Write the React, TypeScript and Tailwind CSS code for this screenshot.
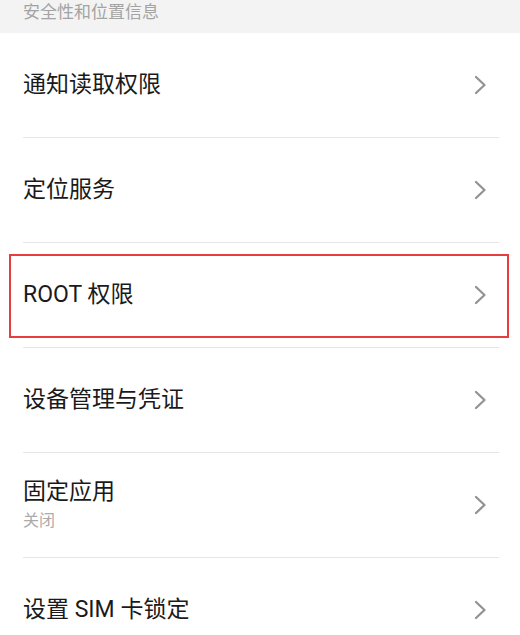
import React from 'react';

interface Item {
  title: string;
  sub?: string;
  highlight?: boolean;
}

const items: Item[] = [
  { title: '通知读取权限' },
  { title: '定位服务' },
  { title: 'ROOT 权限', highlight: true },
  { title: '设备管理与凭证' },
  { title: '固定应用', sub: '关闭' },
  { title: '设置 SIM 卡锁定' },
];

const Chevron = () => (
  <svg width="13" height="20" viewBox="0 0 13 20" fill="none" className="shrink-0">
    <path d="M2 2 L10.5 10 L2 18" stroke="#939393" strokeWidth="2.3" strokeLinecap="round" strokeLinejoin="round" />
  </svg>
);

const App: React.FC = () => {
  return (
    <div
      className="w-[520px] h-[635px] overflow-hidden bg-white"
      style={{ fontFamily: 'Roboto, "Noto Sans CJK SC", sans-serif' }}
    >
      {/* section header */}
      <div className="h-[33px] bg-[#f3f3f3] pl-[23px]">
        <span className="block text-[17px] leading-[24px] text-[#a3a3a3]">安全性和位置信息</span>
      </div>

      {items.map((item) => (
        <div key={item.title} className="relative">
          <div className="ml-[23px] mr-[21px] h-[105px] border-b border-[#e6e6e6] flex items-center justify-between pr-[12px]">
            <div className="flex flex-col">
              <span className="text-[23px] leading-[28px] text-[#1a1a1a]">{item.title}</span>
              {item.sub && (
                <span className="text-[16px] leading-[22px] mt-[4px] text-[#ababab]">{item.sub}</span>
              )}
            </div>
            <Chevron />
          </div>
          {item.highlight && (
            <div className="absolute top-[11px] bottom-[10px] left-[9px] right-[11px] border-2 border-[#e53e3e]" />
          )}
        </div>
      ))}
    </div>
  );
};

export default App;
